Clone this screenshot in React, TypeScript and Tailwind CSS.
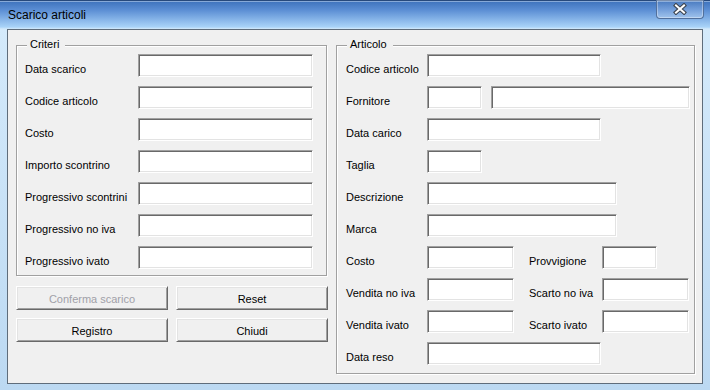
import React from 'react'

const FONT = { fontFamily: '"Liberation Sans", Arial, sans-serif' }

function Field({ w }: { w: string }) {
  return (
    <div
      className={`${w} h-[23px] shrink-0 bg-white border border-t-[#a0a0a0] border-l-[#a0a0a0] border-b-white border-r-white shadow-[inset_1px_1px_0_#696969,inset_-1px_-1px_0_#e3e3e3]`}
    />
  )
}

function Label({ text, w }: { text: string; w: string }) {
  return <div className={`${w} shrink-0 self-start pt-[9px] leading-[13px] text-[11px] text-black whitespace-nowrap`}>{text}</div>
}

function Row({ children }: { children: React.ReactNode }) {
  return <div className="flex h-[23px]">{children}</div>
}

function Group({ title, className, children }: { title: string; className: string; children: React.ReactNode }) {
  return (
    <div className={`relative shrink-0 border border-[#a0a0a0] shadow-[inset_1px_1px_0_#fff,1px_1px_0_#fff] ${className}`}>
      <span className="absolute left-[10px] top-[-8px] bg-[#f0f0f0] pl-[3px] pr-[6px] leading-[13px] text-[11px] text-black">
        {title}
      </span>
      {children}
    </div>
  )
}

function Btn({ label, disabled }: { label: string; disabled?: boolean }) {
  return (
    <div
      className={`h-[24px] flex items-center justify-center pt-[2px] text-[11px] bg-[#f0f0f0] border border-t-white border-l-white border-b-[#696969] border-r-[#696969] shadow-[inset_1px_1px_0_#e3e3e3,inset_-1px_-1px_0_#a0a0a0] ${
        disabled ? 'text-[#a0a0a8]' : 'text-black'
      }`}
    >
      {label}
    </div>
  )
}

const CRITERI = [
  'Data scarico',
  'Codice articolo',
  'Costo',
  'Importo scontrino',
  'Progressivo scontrini',
  'Progressivo no iva',
  'Progressivo ivato',
]

export default function App() {
  return (
    <div
      className="w-[710px] h-[390px] flex flex-col overflow-hidden bg-[linear-gradient(180deg,#3a6fb9_0px,#5b8ed4_10px,#a9d3f8_27px,#d4eafb_29px,#bcd9f2_100%)]"
      style={FONT}
    >
      {/* Barra titolo */}
      <div className="h-[29px] shrink-0 flex items-start shadow-[inset_0_1px_0_#27497c,inset_0_2px_0_#86a9d8]">
        <div className="pl-[8px] pt-[8px] text-[12px] leading-[14px] text-black">Scarico articoli</div>
        <div className="flex-1" />
        <div className="mr-[6px] w-[48px] h-[19px] flex items-center justify-center rounded-b-[4px] border border-t-0 border-[#52709c] shadow-[inset_0_0_0_1px_rgba(255,255,255,0.35)] bg-[linear-gradient(180deg,rgba(255,255,255,0.05),rgba(255,255,255,0.25))]">
          <svg width="14" height="12" viewBox="0 0 14 12">
            <path d="M3 2.5 L11 9.5 M11 2.5 L3 9.5" stroke="#3c4450" strokeWidth="4.2" strokeLinecap="square" />
            <path d="M3 2.5 L11 9.5 M11 2.5 L3 9.5" stroke="#ffffff" strokeWidth="2" strokeLinecap="square" />
          </svg>
        </div>
      </div>

      {/* Area client */}
      <div className="ml-[7px] w-[696px] h-[355px] shrink-0 border border-[#5f6d7b] bg-[#f0f0f0]">
        <div className="flex gap-[8px] pl-[8px] pt-[15px]">
          <div className="w-[312px] shrink-0 flex flex-col">
            <Group title="Criteri" className="w-[311px] h-[231px]">
              <div className="flex flex-col gap-[9px] pt-[8px] pl-[8px]">
                {CRITERI.map((c) => (
                  <Row key={c}>
                    <Label text={c} w="w-[113px]" />
                    <Field w="w-[175px]" />
                  </Row>
                ))}
              </div>
            </Group>
            <div className="mt-[10px] grid grid-cols-2 gap-[8px]">
              <Btn label="Conferma scarico" disabled />
              <Btn label="Reset" />
              <Btn label="Registro" />
              <Btn label="Chiudi" />
            </div>
          </div>

          <Group title="Articolo" className="w-[359px] h-[329px]">
            <div className="flex flex-col gap-[9px] pt-[8px] pl-[9px]">
              <Row>
                <Label text="Codice articolo" w="w-[81px]" />
                <Field w="w-[174px]" />
              </Row>
              <Row>
                <Label text="Fornitore" w="w-[81px]" />
                <Field w="w-[55px]" />
                <div className="w-[9px]" />
                <Field w="w-[199px]" />
              </Row>
              <Row>
                <Label text="Data carico" w="w-[81px]" />
                <Field w="w-[174px]" />
              </Row>
              <Row>
                <Label text="Taglia" w="w-[81px]" />
                <Field w="w-[55px]" />
              </Row>
              <Row>
                <Label text="Descrizione" w="w-[81px]" />
                <Field w="w-[190px]" />
              </Row>
              <Row>
                <Label text="Marca" w="w-[81px]" />
                <Field w="w-[190px]" />
              </Row>
              <Row>
                <Label text="Costo" w="w-[81px]" />
                <Field w="w-[87px]" />
                <div className="w-[15px]" />
                <Label text="Provvigione" w="w-[73px]" />
                <Field w="w-[55px]" />
              </Row>
              <Row>
                <Label text="Vendita no iva" w="w-[81px]" />
                <Field w="w-[87px]" />
                <div className="w-[15px]" />
                <Label text="Scarto no iva" w="w-[73px]" />
                <Field w="w-[87px]" />
              </Row>
              <Row>
                <Label text="Vendita ivato" w="w-[81px]" />
                <Field w="w-[87px]" />
                <div className="w-[15px]" />
                <Label text="Scarto ivato" w="w-[73px]" />
                <Field w="w-[87px]" />
              </Row>
              <Row>
                <Label text="Data reso" w="w-[81px]" />
                <Field w="w-[174px]" />
              </Row>
            </div>
          </Group>
        </div>
      </div>
    </div>
  )
}
